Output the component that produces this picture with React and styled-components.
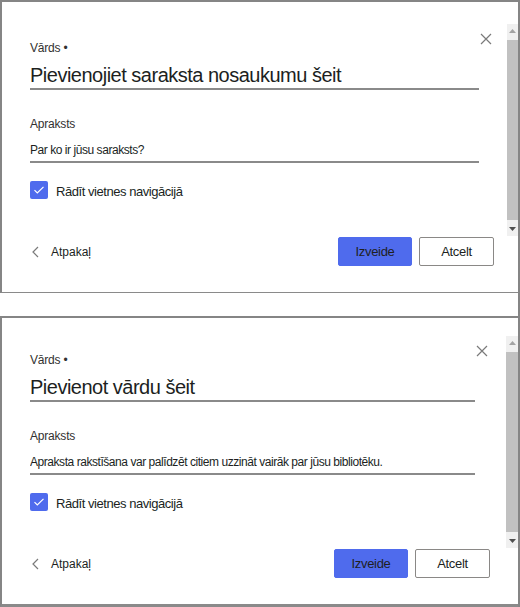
import React from "react";
import styled, { createGlobalStyle } from "styled-components";

const GlobalStyle = createGlobalStyle`
  html, body {
    margin: 0;
    padding: 0;
    background: #ffffff;
  }
  body {
    font-family: "Liberation Sans", Arial, sans-serif;
    color: #201f1e;
  }
  * {
    box-sizing: border-box;
  }
`;

const Page = styled.div`
  width: 520px;
  height: 607px;
  display: flex;
  flex-direction: column;
  border-right: 2px solid #858585;
  background: #ffffff;
`;

const Panel = styled.section`
  display: flex;
  border-top: 2px solid #858585;
  border-left: 2px solid #858585;
  border-bottom: ${(p) => p.$bottom}px solid #8a8a8a;
`;

const Gap = styled.div`
  height: 23px;
`;

const Body = styled.div`
  flex: 1;
  display: flex;
  flex-direction: column;
  padding: ${(p) => p.$top}px ${(p) => p.$inset}px 26px 28px;
`;

const TopRow = styled.div`
  display: flex;
  justify-content: space-between;
  height: 24px;
  padding-right: 15px;
`;

const Label = styled.label`
  display: block;
  font-size: 12px;
  line-height: 16px;
  letter-spacing: -0.2px;
  color: #323130;
  align-self: flex-end;
`;

const CloseButton = styled.button`
  width: 12px;
  height: 12px;
  padding: 0;
  border: none;
  background: none;
  display: flex;
  align-self: flex-start;
  margin-top: 1px;
  cursor: pointer;
`;

const Field = styled.div`
  padding-right: 28px;
  margin-top: ${(p) => p.$gap}px;
`;

const TitleInput = styled.input`
  display: block;
  width: 100%;
  height: 26px;
  padding: 0 0 2px;
  border: none;
  border-bottom: 2px solid #8a8a8a;
  font-family: "Liberation Sans", Arial, sans-serif;
  font-size: 20px;
  line-height: 24px;
  letter-spacing: -0.5px;
  color: #201f1e;
  background: transparent;
  outline: none;
  &::placeholder {
    color: #201f1e;
    opacity: 1;
  }
`;

const DescInput = styled(TitleInput)`
  height: 21px;
  padding: 0 0 3px;
  font-size: 12px;
  line-height: 16px;
  letter-spacing: -0.45px;
`;

const CheckRow = styled.label`
  display: flex;
  align-items: flex-start;
  gap: 8px;
  height: 18px;
  margin-top: 18px;
  font-size: 13px;
  line-height: 18px;
  letter-spacing: -0.45px;
  color: #201f1e;
  cursor: pointer;
`;

const CheckBox = styled.span`
  width: 18px;
  height: 18px;
  border-radius: 2px;
  background: #4f6bed;
  display: flex;
  align-items: center;
  justify-content: center;
  flex-shrink: 0;
`;

const CheckText = styled.span`
  padding-top: 2px;
`;

const Footer = styled.div`
  display: flex;
  align-items: center;
  justify-content: space-between;
  margin-top: 38px;
  padding-right: 13px;
`;

const BackButton = styled.button`
  display: flex;
  align-items: center;
  gap: 12px;
  padding: 0 0 0 2px;
  border: none;
  background: none;
  font-family: "Liberation Sans", Arial, sans-serif;
  font-size: 12px;
  color: #201f1e;
  cursor: pointer;
`;

const Actions = styled.div`
  display: flex;
  gap: 7px;
`;

const Button = styled.button`
  width: ${(p) => (p.$primary ? 74 : 75)}px;
  height: 29px;
  padding: 0;
  border-radius: 2px;
  border: 1px solid ${(p) => (p.$primary ? "#4f6bed" : "#8a8886")};
  background: ${(p) => (p.$primary ? "#4f6bed" : "#ffffff")};
  color: #201f1e;
  font-family: "Liberation Sans", Arial, sans-serif;
  font-size: 13px;
  letter-spacing: -0.3px;
  cursor: pointer;
`;

const ScrollTrack = styled.div`
  width: ${(p) => p.$width}px;
  height: 212px;
  margin-top: ${(p) => p.$top}px;
  background: #f0f0f0;
  display: flex;
  flex-direction: column;
  align-items: center;
`;

const ScrollArrow = styled.div`
  height: 14px;
  display: flex;
  align-items: center;
  justify-content: center;
`;

const ScrollThumb = styled.div`
  flex: 1;
  width: 100%;
  margin: 2px 0;
  background: #c1c1c1;
`;

const CloseIcon = () => (
  <svg width="12" height="12" viewBox="0 0 12 12">
    <path d="M1 1 L11 11 M11 1 L1 11" stroke="#7a7a7a" strokeWidth="1.2" fill="none" />
  </svg>
);

const ChevronIcon = () => (
  <svg width="7" height="12" viewBox="0 0 7 12">
    <path d="M6 1 L1 6 L6 11" stroke="#7a7a7a" strokeWidth="1.2" fill="none" />
  </svg>
);

const CheckIcon = () => (
  <svg width="12" height="10" viewBox="0 0 12 10">
    <path d="M1.5 5.2 L4.3 8 L10.5 1.8" stroke="#ffffff" strokeWidth="1.2" fill="none" />
  </svg>
);

function Scrollbar({ width, top }) {
  return (
    <ScrollTrack $width={width} $top={top}>
      <ScrollArrow>
        <svg width="7" height="4" viewBox="0 0 7 4">
          <path d="M0 4 L3.5 0 L7 4 Z" fill="#a3a3a3" />
        </svg>
      </ScrollArrow>
      <ScrollThumb />
      <ScrollArrow>
        <svg width="7" height="4" viewBox="0 0 7 4">
          <path d="M0 0 L3.5 4 L7 0 Z" fill="#505050" />
        </svg>
      </ScrollArrow>
    </ScrollTrack>
  );
}

function CreateDialog({ title, description, top, bottom, track, inset }) {
  return (
    <Panel $bottom={bottom}>
      <Body $top={top} $inset={inset}>
        <TopRow>
          <Label>Vārds •</Label>
          <CloseButton aria-label="Aizvērt">
            <CloseIcon />
          </CloseButton>
        </TopRow>
        <Field $gap={8}>
          <TitleInput placeholder={title} />
        </Field>
        <Field $gap={26}>
          <Label>Apraksts</Label>
        </Field>
        <Field $gap={10}>
          <DescInput placeholder={description} />
        </Field>
        <CheckRow>
          <CheckBox>
            <CheckIcon />
          </CheckBox>
          <CheckText>Rādīt vietnes navigācijā</CheckText>
        </CheckRow>
        <Footer>
          <BackButton>
            <ChevronIcon />
            Atpakaļ
          </BackButton>
          <Actions>
            <Button $primary>Izveide</Button>
            <Button>Atcelt</Button>
          </Actions>
        </Footer>
      </Body>
      <Scrollbar width={track} top={top - 8} />
    </Panel>
  );
}

export default function App() {
  return (
    <>
      <GlobalStyle />
      <Page>
        <CreateDialog
          title="Pievienojiet saraksta nosaukumu šeit"
          description="Par ko ir jūsu saraksts?"
          top={30}
          bottom={1}
          track={11}
          inset={0}
        />
        <Gap />
        <CreateDialog
          title="Pievienot vārdu šeit"
          description="Apraksta rakstīšana var palīdzēt citiem uzzināt vairāk par jūsu bibliotēku."
          top={26}
          bottom={3}
          track={12}
          inset={3}
        />
      </Page>
    </>
  );
}
